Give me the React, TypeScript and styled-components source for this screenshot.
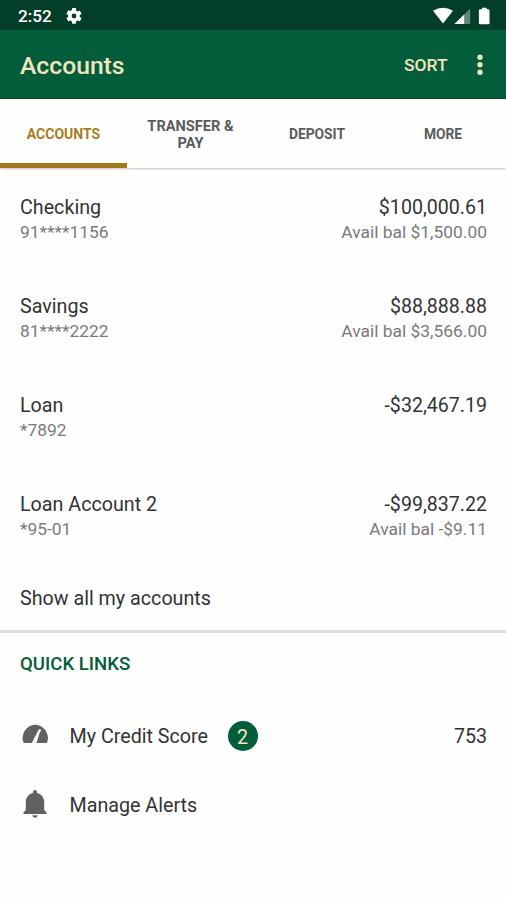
import React from "react";
import styled, { createGlobalStyle } from "styled-components";

const GlobalStyle = createGlobalStyle`
  *, *::before, *::after { box-sizing: border-box; }
  body { margin: 0; background: #fefefe; font-family: Roboto, "Liberation Sans", sans-serif; }
`;

const Screen = styled.div`
  display: flex;
  flex-direction: column;
  width: 506px;
  height: 900px;
  overflow: hidden;
  background: #fefefe;
  color: #333;
`;

const StatusBar = styled.div`
  display: flex;
  align-items: center;
  height: 30px;
  padding: 1px 16px 0 18px;
  background: #033f28;
  color: #fff;
`;

const Clock = styled.span`
  flex: 1;
  display: flex;
  align-items: center;
  gap: 14px;
  font-size: 17.2px;
  font-weight: 500;
  line-height: 20px;
`;

const StatusIcons = styled.div`
  display: flex;
  align-items: center;
`;

const AppBar = styled.header`
  display: flex;
  align-items: center;
  height: 69px;
  padding: 3px 23px 0 20px;
  background: #045d3a;
  border-bottom: 1px solid #034a25;
  color: #f0e6bf;
`;

const Title = styled.h1`
  flex: 1;
  margin: 0;
  font-size: 24.7px;
  font-weight: 500;
  line-height: 30px;
`;

const SortButton = styled.button`
  padding: 0;
  margin-top: -1px;
  border: 0;
  background: none;
  color: inherit;
  font: 500 17.4px/22px Roboto, sans-serif;
`;

const MenuButton = styled.button`
  display: flex;
  margin: -2px 0 0 29.5px;
  padding: 0;
  border: 0;
  background: none;
  color: inherit;
`;

const Tabs = styled.nav`
  display: grid;
  grid-template-columns: 127px 127px 126px 126px;
  height: 69px;
  box-shadow: 0 1px 2px rgba(0, 0, 0, 0.24);
`;

const Tab = styled.div<{ $active?: boolean; $wide?: boolean }>`
  display: flex;
  align-items: center;
  justify-content: center;
  padding-top: ${(p) => (p.$active ? 7 : 2)}px;
  border-bottom: ${(p) => (p.$active ? "5px solid #a07a1b" : "0")};
  color: ${(p) => (p.$active ? "#a67f20" : "#5b5b5b")};
  font-size: ${(p) => (p.$active ? 14 : p.$wide ? 14.6 : 13.8)}px;
  font-weight: 700;
  line-height: 17px;
  text-align: center;
`;

const AccountList = styled.section`
  display: flex;
  flex-direction: column;
  padding: 27px 19px 0 20px;
`;

const AccountRow = styled.div`
  display: flex;
  justify-content: space-between;
  height: 99.1px;
`;

const Column = styled.div<{ $end?: boolean }>`
  display: flex;
  flex-direction: column;
  align-items: ${(p) => (p.$end ? "flex-end" : "flex-start")};
`;

const Primary = styled.span`
  font-size: 19.7px;
  line-height: 26px;
`;

const Amount = styled(Primary)`
  font-size: 19.6px;
`;

const Secondary = styled.span`
  color: #7a7a7a;
  font-size: 17.4px;
  line-height: 22px;
`;

const ShowAll = styled.div`
  height: 44px;
  margin-top: -5px;
  padding-left: 20px;
  font-size: 19.7px;
  line-height: 26px;
`;

const Divider = styled.div`
  height: 3px;
  background: #dedede;
`;

const SectionTitle = styled.h2`
  margin: 18px 0 0;
  padding-left: 20px;
  color: #045d3a;
  font-size: 18.6px;
  font-weight: 500;
  line-height: 26px;
`;

const LinkRow = styled.div`
  display: flex;
  align-items: center;
  height: 69px;
  padding: 0 19px 0 20px;
`;

const LinkIcon = styled.span`
  display: flex;
  width: 49.5px;
  padding-bottom: 3px;
`;

const Badge = styled.span`
  display: flex;
  align-items: center;
  justify-content: center;
  width: 30px;
  height: 30px;
  margin: -1px 0 0 19.5px;
  padding-top: 2px;
  border-radius: 50%;
  background: #045d3a;
  color: #f0e6bf;
  font-size: 19.7px;
`;

const Score = styled(Amount)`
  margin-left: auto;
`;

const QuickLinks = styled.div`
  padding-top: 25px;
`;

const accounts = [
  { name: "Checking", number: "91****1156", balance: "$100,000.61", available: "Avail bal $1,500.00" },
  { name: "Savings", number: "81****2222", balance: "$88,888.88", available: "Avail bal $3,566.00" },
  { name: "Loan", number: "*7892", balance: "-$32,467.19" },
  { name: "Loan Account 2", number: "*95-01", balance: "-$99,837.22", available: "Avail bal -$9.11" },
];

const GearIcon = () => (
  <svg width="16" height="16" viewBox="2 2 20 20" fill="#fff">
    <path d="M19.14 12.94c.04-.3.06-.61.06-.94s-.02-.64-.07-.94l2.03-1.58a.49.49 0 0 0 .12-.61l-1.92-3.32a.49.49 0 0 0-.59-.22l-2.39.96a7 7 0 0 0-1.62-.94l-.36-2.54A.48.48 0 0 0 13.92 2h-3.84a.47.47 0 0 0-.47.41l-.36 2.54c-.59.24-1.13.57-1.62.94l-2.39-.96a.48.48 0 0 0-.59.22L2.74 8.87a.47.47 0 0 0 .12.61l2.03 1.58c-.05.3-.09.63-.09.94s.02.64.07.94l-2.03 1.58a.49.49 0 0 0-.12.61l1.92 3.32c.12.22.37.29.59.22l2.39-.96c.5.38 1.03.7 1.62.94l.36 2.54c.05.24.24.41.48.41h3.84c.24 0 .44-.17.47-.41l.36-2.54a6.8 6.8 0 0 0 1.62-.94l2.39.96c.22.08.47 0 .59-.22l1.92-3.32a.47.47 0 0 0-.12-.61zM12 15a3 3 0 1 1 0-6 3 3 0 0 1 0 6z" />
  </svg>
);

const SignalIcons = () => (
  <svg width="57" height="18" viewBox="0 0 57 18" fill="#fff">
    <path d="M0 3.8Q10 -2.4 20 3.8L10 16.5z" />
    <path d="M37.2 1.5V17H21.5z" fillOpacity=".38" />
    <path d="M31.2 7.5V17H21.5z" />
    <path d="M47.5 2.2h1.5V.8h4.6v1.4h1.5q1.4 0 1.4 1.2v12.8q0 1-1 1h-8.6q-1 0-1-1V3.4q0-1.2 1.2-1.2z" />
  </svg>
);

const MoreIcon = () => (
  <svg width="6" height="22" viewBox="0 0 6 22" fill="currentColor">
    <circle cx="3" cy="3.2" r="2.7" />
    <circle cx="3" cy="10.7" r="2.7" />
    <circle cx="3" cy="18.2" r="2.7" />
  </svg>
);

const GaugeIcon = () => (
  <svg width="30" height="22" viewBox="0 0 30 22">
    <path d="M3.8 19A13 13 0 0 1 2.5 14C3 6 9 .7 15.2 .7S27.6 6 28 14a13 13 0 0 1-1.2 5z" fill="#616161" />
    <path d="M11.3 20L18.4 6.2Q19.6 4.4 20.7 5.4T19.8 8.5L16 20z" fill="#fefefe" />
  </svg>
);

const BellIcon = () => (
  <svg width="30" height="30" viewBox="0 0 30 30" fill="#616161">
    <path d="M13 4V3Q13 1 15 1t2 2v1c4.8 1 7.2 5 7.2 9v8l2.3 2.4V25h-23v-1.6L5.8 21v-8c0-4 2.4-8 7.2-9z" />
    <path d="M12.3 26.2h5.4q-.4 2.5-2.7 2.5t-2.7-2.5z" />
  </svg>
);

export default function App() {
  return (
    <>
      <GlobalStyle />
      <Screen>
        <StatusBar>
          <Clock>
            2:52
            <GearIcon />
          </Clock>
          <StatusIcons>
            <SignalIcons />
          </StatusIcons>
        </StatusBar>
        <AppBar>
          <Title>Accounts</Title>
          <SortButton>SORT</SortButton>
          <MenuButton aria-label="More options">
            <MoreIcon />
          </MenuButton>
        </AppBar>
        <Tabs>
          <Tab $active>ACCOUNTS</Tab>
          <Tab $wide>
            TRANSFER &amp;
            <br />
            PAY
          </Tab>
          <Tab>DEPOSIT</Tab>
          <Tab>MORE</Tab>
        </Tabs>
        <AccountList>
          {accounts.map((a) => (
            <AccountRow key={a.name}>
              <Column>
                <Primary>{a.name}</Primary>
                <Secondary>{a.number}</Secondary>
              </Column>
              <Column $end>
                <Amount>{a.balance}</Amount>
                {a.available && <Secondary>{a.available}</Secondary>}
              </Column>
            </AccountRow>
          ))}
        </AccountList>
        <ShowAll>Show all my accounts</ShowAll>
        <Divider />
        <SectionTitle>QUICK LINKS</SectionTitle>
        <QuickLinks>
          <LinkRow>
            <LinkIcon>
              <GaugeIcon />
            </LinkIcon>
            <Primary>My Credit Score</Primary>
            <Badge>2</Badge>
            <Score>753</Score>
          </LinkRow>
          <LinkRow>
            <LinkIcon>
              <BellIcon />
            </LinkIcon>
            <Primary>Manage Alerts</Primary>
          </LinkRow>
        </QuickLinks>
      </Screen>
    </>
  );
}
